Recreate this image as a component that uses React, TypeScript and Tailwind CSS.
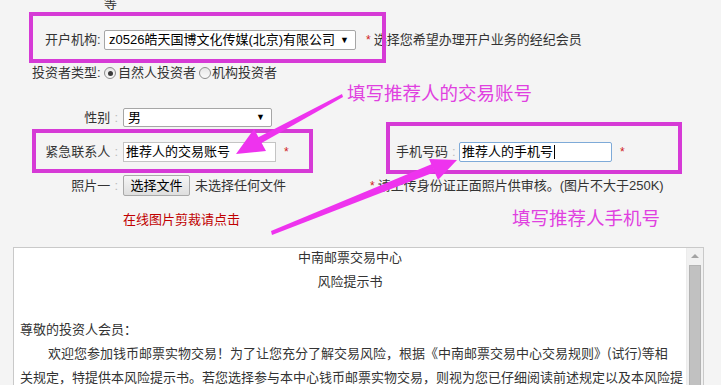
import React from 'react'

const FONT = "font-['Liberation_Sans','Noto_Sans_CJK_SC',sans-serif]"

function Radio({ checked }: { checked?: boolean }) {
  return (
    <span className="flex h-[12px] w-[12px] items-center justify-center rounded-full border border-[#8d8d8d] bg-gradient-to-b from-[#e6e6e6] to-[#fafafa]">
      {checked && <span className="h-[5px] w-[5px] rounded-full bg-[#3a3a3a]" />}
    </span>
  )
}

function FakeSelect({ value, width }: { value: string; width: string }) {
  return (
    <div
      className={`flex h-full items-center justify-between rounded-[2px] border border-[#a6a6a6] bg-white pl-[4px] pr-[6px] text-[13px] text-black ${width}`}
    >
      <span className="whitespace-nowrap">{value}</span>
      <span className="text-[9px] leading-none">▼</span>
    </div>
  )
}

function Label({ text }: { text: string }) {
  return (
    <span className="flex w-[118px] shrink-0 justify-end whitespace-nowrap text-[13px] text-[#333]">
      {text}
      <span className="ml-[4px] text-[#bbb]">:</span>
    </span>
  )
}

function Star({ className = '' }: { className?: string }) {
  return <span className={`text-[12px] text-[#d02020] ${className}`}>*</span>
}

export default function App() {
  return (
    <div className={`relative h-[385px] w-[721px] overflow-hidden bg-[#f4f4f4] ${FONT}`}>
      {/* form */}
      <div className="h-[12px] pl-[104px] text-[13px] leading-[8px] text-[#333]">等</div>

      <div className="mt-[18px] flex h-[20px] items-center">
        <span className="w-[104px] shrink-0 whitespace-nowrap pl-[45px] text-[13px] text-[#333]">开户机构:</span>
        <FakeSelect value="z0526皓天国博文化传媒(北京)有限公司" width="w-[252px]" />
        <Star className="ml-[10px]" />
        <span className="ml-[3px] whitespace-nowrap text-[13px] text-[#333]">选择您希望办理开户业务的经纪会员</span>
      </div>

      <div className="mt-[14px] flex h-[18px] items-center text-[13px] text-[#333]">
        <span className="w-[104px] shrink-0 whitespace-nowrap pl-[32px]">投资者类型:</span>
        <Radio checked />
        <span className="ml-[2px] whitespace-nowrap">自然人投资者</span>
        <span className="ml-[3px]">
          <Radio />
        </span>
        <span className="ml-[1px] whitespace-nowrap">机构投资者</span>
      </div>

      <div className="mt-[26px] flex h-[19px] items-center">
        <Label text="性别" />
        <div className="ml-[5px] h-full">
          <FakeSelect value="男" width="w-[149px]" />
        </div>
      </div>

      <div className="mt-[15px] flex h-[20px] items-center">
        <div className="flex w-[396px] shrink-0 items-center">
          <Label text="紧急联系人" />
          <div className="ml-[5px] flex h-[20px] w-[153px] items-center border border-[#c4c4c4] bg-white pl-[2px] text-[13px] text-black">
            推荐人的交易账号
          </div>
          <Star className="ml-[8px]" />
        </div>
        <span className="flex w-[63px] shrink-0 whitespace-nowrap text-[13px] text-[#333]">
          手机号码
          <span className="ml-[4px] text-[#bbb]">:</span>
        </span>
        <div className="flex h-[20px] w-[153px] items-center rounded-[2px] border border-[#7eaad8] bg-white pl-[2px] text-[13px] text-black">
          推荐人的手机号
          <span className="ml-[1px] h-[14px] w-px bg-black" />
        </div>
        <Star className="ml-[8px]" />
      </div>

      <div className="mt-[13px] flex h-[21px] items-center">
        <div className="flex w-[370px] shrink-0 items-center">
          <Label text="照片一" />
          <div className="ml-[5px] flex h-[21px] w-[67px] items-center justify-center rounded-[2px] border border-[#a9a9a9] bg-gradient-to-b from-[#f6f6f6] to-[#dedede] text-[13px] text-black">
            选择文件
          </div>
          <span className="ml-[5px] whitespace-nowrap text-[13px] text-[#333]">未选择任何文件</span>
        </div>
        <Star />
        <span className="ml-[3px] whitespace-nowrap text-[13px] text-[#333]">请上传身份证正面照片供审核。(图片不大于250K)</span>
      </div>

      <div className="mt-[16px] h-[15px] pl-[123px] text-[13px] leading-[15px] text-[#c00000]">在线图片剪裁请点击</div>

      {/* risk notice text box */}
      <div className="ml-[13px] mt-[20px] flex h-[200px] w-[691px] border border-[#c9c9c9] bg-white">
        <div className="-mt-[3px] min-w-0 flex-1 overflow-hidden px-[6px] text-[13px] leading-[24px] text-[#333] font-['Noto_Sans_CJK_SC',sans-serif]">
          <div className="text-center">中南邮票交易中心</div>
          <div className="text-center">风险提示书</div>
          <div>&nbsp;</div>
          <div className="whitespace-nowrap">尊敬的投资人会员：</div>
          <div className="whitespace-nowrap pl-[28px]">欢迎您参加钱币邮票实物交易！为了让您充分了解交易风险，根据《中南邮票交易中心交易规则》(试行)等相</div>
          <div className="whitespace-nowrap">关规定，特提供本风险提示书。若您选择参与本中心钱币邮票实物交易，则视为您已仔细阅读前述规定以及本风险提</div>
        </div>
        <div className="flex w-[17px] shrink-0 flex-col items-center border-l border-[#ececec] bg-[#f1f1f1]">
          <div className="mt-[6px] h-0 w-0 border-x-[4px] border-b-[4px] border-x-transparent border-b-[#a3a3a3]" />
          <div className="mt-[7px] w-[12px] flex-1 border border-[#b3b3b3] bg-[#c1c1c1]" />
        </div>
      </div>

      {/* annotations drawn over the page */}
      <div className="pointer-events-none absolute inset-0">
        <div className="absolute left-[29px] top-[12px] h-[51px] w-[357px] border-[4px] border-[#d63ad6]" />
        <div className="absolute left-[32px] top-[129px] h-[44px] w-[281px] border-[4px] border-[#d63ad6]" />
        <div className="absolute left-[386px] top-[122px] h-[52px] w-[296px] border-[4px] border-[#d63ad6]" />
        <div className="absolute left-[347px] top-[80px] whitespace-nowrap text-[18.5px] leading-[24px] text-[#e040e0] font-['Noto_Sans_CJK_SC',sans-serif]">
          填写推荐人的交易账号
        </div>
        <div className="absolute left-[512px] top-[205px] whitespace-nowrap text-[18.5px] leading-[24px] text-[#e040e0] font-['Noto_Sans_CJK_SC',sans-serif]">
          填写推荐人手机号
        </div>
        <svg className="absolute inset-0" width="721" height="385" viewBox="0 0 721 385">
          <polygon points="342,94 343,97 258,145 255,139" fill="#ee33ee" />
          <polygon points="236,154 254,129 266,151" fill="#ee33ee" />
          <polygon points="271,231 272,235 435,172 432,164" fill="#ee33ee" />
          <polygon points="457,160 429,159 438,180" fill="#ee33ee" />
        </svg>
      </div>
    </div>
  )
}
